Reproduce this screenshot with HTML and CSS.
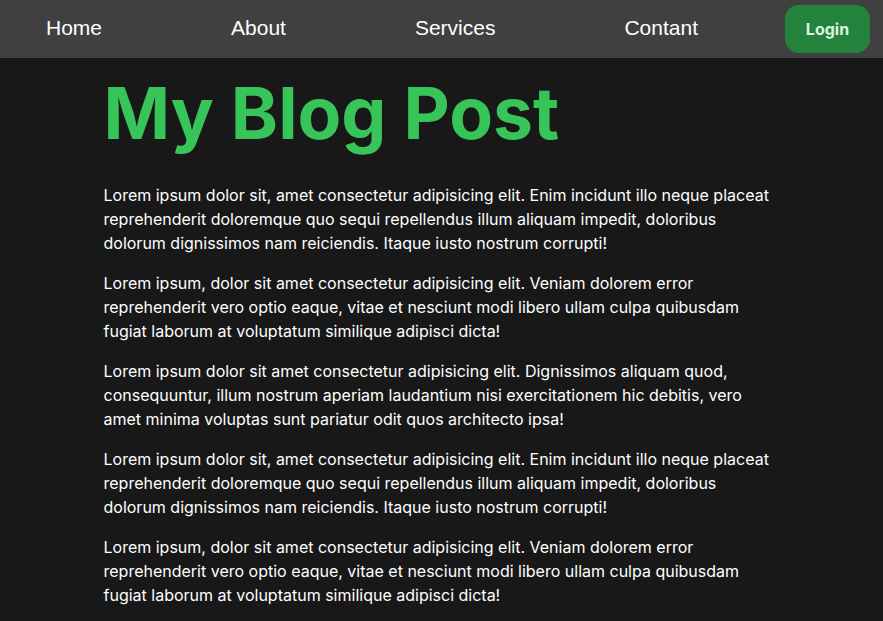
FILE: index.html
```html
<!DOCTYPE html>
<html lang="en">
<head>
<meta charset="utf-8">
<title>My Blog Post</title>
<link rel="stylesheet" href="styles.css">
</head>
<body>
<nav class="nav">
  <div class="nav-links">
    <a class="nav-link" href="#">Home</a>
    <a class="nav-link" href="#">About</a>
    <a class="nav-link" href="#">Services</a>
    <a class="nav-link" href="#">Contant</a>
  </div>
  <button class="login">Login</button>
</nav>
<main class="post">
  <h1 class="title">My Blog Post</h1>
  <p>Lorem ipsum dolor sit, amet consectetur adipisicing elit. Enim incidunt illo neque placeat reprehenderit doloremque quo sequi repellendus illum aliquam impedit, doloribus dolorum dignissimos nam reiciendis. Itaque iusto nostrum corrupti!</p>
  <p>Lorem ipsum, dolor sit amet consectetur adipisicing elit. Veniam dolorem error reprehenderit vero optio eaque, vitae et nesciunt modi libero ullam culpa quibusdam fugiat laborum at voluptatum similique adipisci dicta!</p>
  <p>Lorem ipsum dolor sit amet consectetur adipisicing elit. Dignissimos aliquam quod, consequuntur, illum nostrum aperiam laudantium nisi exercitationem hic debitis, vero amet minima voluptas sunt pariatur odit quos architecto ipsa!</p>
  <p>Lorem ipsum dolor sit, amet consectetur adipisicing elit. Enim incidunt illo neque placeat reprehenderit doloremque quo sequi repellendus illum aliquam impedit, doloribus dolorum dignissimos nam reiciendis. Itaque iusto nostrum corrupti!</p>
  <p>Lorem ipsum, dolor sit amet consectetur adipisicing elit. Veniam dolorem error reprehenderit vero optio eaque, vitae et nesciunt modi libero ullam culpa quibusdam fugiat laborum at voluptatum similique adipisci dicta!</p>
</main>
</body>
</html>
```
FILE: styles.css
```css
* { box-sizing: border-box; }
html, body { margin: 0; padding: 0; }
body {
  background: #181818;
  color: #ffffff;
  font-family: Inter, "Noto Sans", sans-serif;
}
.nav {
  display: flex;
  align-items: center;
  height: 58px;
  padding: 0 13px 0 46px;
  background: #404040;
}
.nav-links {
  display: flex;
  align-items: center;
  gap: 129px;
  padding-bottom: 2px;
}
.nav-link {
  color: #ffffff;
  text-decoration: none;
  font-family: "Liberation Sans", Arial, sans-serif;
  font-size: 21px;
  white-space: nowrap;
}
.login {
  flex-shrink: 0;
  margin-left: auto;
  width: 85px;
  height: 48px;
  border: none;
  border-radius: 14px;
  background: #23823c;
  color: #dcf2e3;
  font-family: Inter, sans-serif;
  font-weight: 700;
  font-size: 16px;
}
.post {
  width: 676px;
  margin: 0 auto;
  padding-top: 12px;
}
.title {
  margin: 0 0 27px;
  color: #37c55a;
  font-size: 71.5px;
  font-weight: 700;
}
.post p {
  margin: 0 0 16px;
  font-size: 16px;
  line-height: 24px;
}
```
